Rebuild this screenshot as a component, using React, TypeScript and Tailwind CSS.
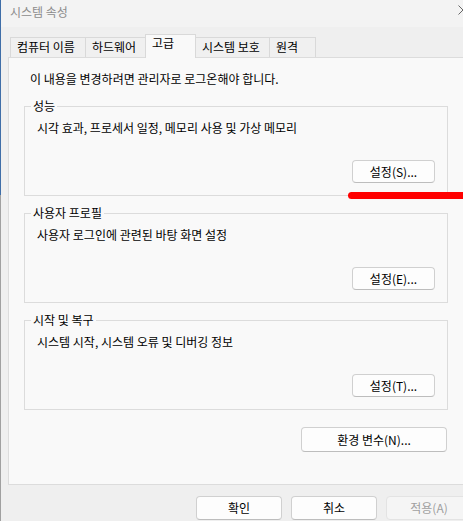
import React from "react";

const tabs = [
    { label: "컴퓨터 이름", width: "w-[76px]" },
    { label: "하드웨어", width: "w-[61px]" },
    { label: "고급", width: "w-[51px]", active: true },
    { label: "시스템 보호", width: "w-[75px]" },
    { label: "원격", width: "w-[47px]" },
];

const groups = [
    { title: "성능", desc: "시각 효과, 프로세서 일정, 메모리 사용 및 가상 메모리", button: "설정(S)...", first: true },
    { title: "사용자 프로필", desc: "사용자 로그인에 관련된 바탕 화면 설정", button: "설정(E)..." },
    { title: "시작 및 복구", desc: "시스템 시작, 시스템 오류 및 디버깅 정보", button: "설정(T)..." },
];

const DialogButton: React.FC<{ label: string; className?: string; disabled?: boolean }> = ({ label, className, disabled }) => (
    <button
        disabled={disabled}
        className={
            "flex items-center justify-center rounded-[4px] border " +
            (disabled
                ? "border-[#e3e3e3] bg-[#f5f5f5] text-[#a0a0a0] "
                : "border-[#d0d0d0] border-b-[#bdbdbd] bg-[#fdfdfd] text-black ") +
            (className ?? "")
        }
    >
        {label}
    </button>
);

const GroupBox: React.FC<{ title: string; desc: string; button: string; first?: boolean }> = ({ title, desc, button, first }) => (
    <fieldset className={"border border-[#dcdcdc] " + (first ? "mt-[11px]" : "mt-[9px]")}>
        <legend className="ml-[6px] px-[2px]">{title}</legend>
        <div className="flex flex-col">
            <div className="mt-[6px] pl-[12px]">{desc}</div>
            <div className="flex justify-end pr-[12px] pt-[24px] pb-[12px]">
                <DialogButton label={button} className="w-[83px] h-[23px]" />
            </div>
        </div>
    </fieldset>
);

export default function App() {
    return (
        <div className="relative w-[463px] h-[521px] overflow-hidden flex font-['Noto_Sans_CJK_KR','Malgun_Gothic',sans-serif] text-[12px] leading-[16px] text-black">
            {/* window edge */}
            <div className="w-px shrink-0 flex flex-col">
                <div className="h-[195px] bg-[#3f6ea8]" />
                <div className="flex-1 bg-[#a0a0a0]" />
            </div>

            <div className="flex-1 min-w-0 flex flex-col bg-[#efefef]">
                {/* title bar */}
                <div className="h-[27px] shrink-0 flex items-start bg-[#f3f3f3] pl-[9px] pt-[4px]">
                    <span className="text-[#8c8c8c]">시스템 속성</span>
                    <svg width="10" height="10" viewBox="0 0 10 10" className="ml-auto -mr-[5px] mt-[1px] shrink-0">
                        <path d="M0.5 0.5 L9.5 9.5 M9.5 0.5 L0.5 9.5" stroke="#666666" strokeWidth="1" fill="none" />
                    </svg>
                </div>

                {/* tabs */}
                <div className="h-[30px] shrink-0 flex items-end pl-[9px]">
                    {tabs.map((t, i) => (
                        <div
                            key={t.label}
                            className={
                                "shrink-0 border border-b-0 border-[#d9d9d9] pl-[6px] whitespace-nowrap " +
                                t.width + " " +
                                (i > 0 ? "-ml-px " : "") +
                                (t.active
                                    ? "relative z-10 h-[24px] -mb-px bg-[#f9f9f9]"
                                    : "h-[20px] pt-[1px] bg-[#f0f0f0]")
                            }
                        >
                            {t.label}
                        </div>
                    ))}
                </div>

                {/* panel */}
                <div className="ml-[7px] w-[480px] h-[428px] shrink-0 border border-[#dcdcdc] bg-[#f9f9f9] flex flex-col">
                    <div className="pt-[13px] pl-[21px]">이 내용을 변경하려면 관리자로 로그온해야 합니다.</div>
                    <div className="ml-[15px] w-[424px] flex flex-col">
                        {groups.map(g => (
                            <GroupBox key={g.title} {...g} />
                        ))}
                        <div className="flex justify-end pr-[1px] mt-[17px]">
                            <DialogButton label="환경 변수(N)..." className="w-[146px] h-[25px]" />
                        </div>
                    </div>
                </div>

                {/* footer buttons */}
                <div className="flex gap-[9px] pl-[195px] pt-[11px] shrink-0">
                    <DialogButton label="확인" className="w-[86px] h-[24px] shrink-0" />
                    <DialogButton label="취소" className="w-[86px] h-[24px] shrink-0" />
                    <DialogButton label="적용(A)" className="w-[86px] h-[24px] shrink-0" disabled />
                </div>
            </div>

            {/* red annotation stroke */}
            <div className="absolute left-[348px] top-[192px] w-[130px] h-[7px] rounded-full bg-[#ff0000]" />
        </div>
    );
}
